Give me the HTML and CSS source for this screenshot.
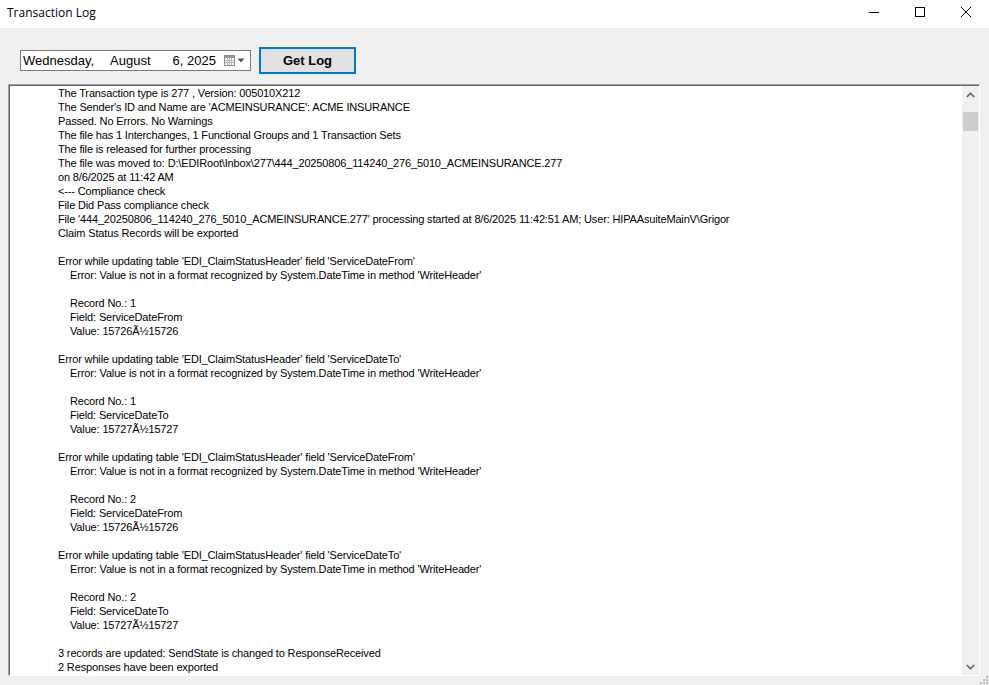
FILE: index.html
```html
<!DOCTYPE html>
<html lang="en">
<head>
    <meta charset="UTF-8">
    <title>Transaction Log</title>
    <link rel="stylesheet" href="styles.css">
</head>
<body>
    <div class="window">
        <div class="titlebar">
            <span class="title">Transaction Log</span>
            <div class="controls">
                <div class="ctl">
                    <svg width="10" height="10" viewBox="0 0 10 10"><path d="M0 5.5h10" stroke="#000" stroke-width="1"/></svg>
                </div>
                <div class="ctl">
                    <svg width="10" height="10" viewBox="0 0 10 10"><rect x="0.5" y="0.5" width="9" height="9" fill="none" stroke="#000" stroke-width="1"/></svg>
                </div>
                <div class="ctl">
                    <svg width="10" height="10" viewBox="0 0 10 10"><path d="M0 0L10 10M10 0L0 10" stroke="#000" stroke-width="1"/></svg>
                </div>
            </div>
        </div>

        <div class="toolbar">
            <div class="datepicker">
                <span class="d-day">Wednesday,</span>
                <span class="d-month">August</span>
                <span class="d-date">6, 2025</span>
                <span class="d-btn">
                    <svg width="11" height="11" viewBox="0 0 11 11">
                        <rect x="0.5" y="0.5" width="10" height="10" fill="#fff" stroke="#8a8a8a"/>
                        <rect x="1" y="1" width="9" height="2" fill="#9a9a9a"/>
                        <path d="M1 5.5h9M1 7.5h9M3.5 3v7M5.5 3v7M7.5 3v7" stroke="#b5b5b5" stroke-width="1"/>
                    </svg>
                    <svg width="8" height="5" viewBox="0 0 8 5"><path d="M0.5 0.5h7L4 4.5z" fill="#555"/></svg>
                </span>
            </div>
            <button class="getlog">Get Log</button>
        </div>

        <div class="logbox">
            <div class="logtext">
                <div>The Transaction type is 277 , Version: 005010X212</div>
                <div>The Sender's ID and Name are 'ACMEINSURANCE': ACME INSURANCE</div>
                <div>Passed. No Errors. No Warnings</div>
                <div>The file has 1 Interchanges, 1 Functional Groups and 1 Transaction Sets</div>
                <div>The file is released for further processing</div>
                <div>The file was moved to: D:\EDIRoot\Inbox\277\444_20250806_114240_276_5010_ACMEINSURANCE.277</div>
                <div>on 8/6/2025 at 11:42 AM</div>
                <div>&lt;--- Compliance check</div>
                <div>File Did Pass compliance check</div>
                <div>File '444_20250806_114240_276_5010_ACMEINSURANCE.277' processing started at 8/6/2025 11:42:51 AM; User: HIPAAsuiteMainV\Grigor</div>
                <div>Claim Status Records will be exported</div>
                <div class="blank"></div>
                <div>Error while updating table 'EDI_ClaimStatusHeader' field 'ServiceDateFrom'</div>
                <div class="ind">Error: Value is not in a format recognized by System.DateTime in method 'WriteHeader'</div>
                <div class="blank"></div>
                <div class="ind">Record No.: 1</div>
                <div class="ind">Field: ServiceDateFrom</div>
                <div class="ind">Value: 15726Ã½15726</div>
                <div class="blank"></div>
                <div>Error while updating table 'EDI_ClaimStatusHeader' field 'ServiceDateTo'</div>
                <div class="ind">Error: Value is not in a format recognized by System.DateTime in method 'WriteHeader'</div>
                <div class="blank"></div>
                <div class="ind">Record No.: 1</div>
                <div class="ind">Field: ServiceDateTo</div>
                <div class="ind">Value: 15727Ã½15727</div>
                <div class="blank"></div>
                <div>Error while updating table 'EDI_ClaimStatusHeader' field 'ServiceDateFrom'</div>
                <div class="ind">Error: Value is not in a format recognized by System.DateTime in method 'WriteHeader'</div>
                <div class="blank"></div>
                <div class="ind">Record No.: 2</div>
                <div class="ind">Field: ServiceDateFrom</div>
                <div class="ind">Value: 15726Ã½15726</div>
                <div class="blank"></div>
                <div>Error while updating table 'EDI_ClaimStatusHeader' field 'ServiceDateTo'</div>
                <div class="ind">Error: Value is not in a format recognized by System.DateTime in method 'WriteHeader'</div>
                <div class="blank"></div>
                <div class="ind">Record No.: 2</div>
                <div class="ind">Field: ServiceDateTo</div>
                <div class="ind">Value: 15727Ã½15727</div>
                <div class="blank"></div>
                <div>3 records are updated: SendState is changed to ResponseReceived</div>
                <div>2 Responses have been exported</div>
            </div>
            <div class="scrollbar">
                <div class="sb-arrow">
                    <svg width="9" height="6" viewBox="0 0 9 6"><path d="M0.8 5L4.5 1.3L8.2 5" fill="none" stroke="#606060" stroke-width="1.6"/></svg>
                </div>
                <div class="sb-track"><div class="sb-thumb"></div></div>
                <div class="sb-arrow">
                    <svg width="9" height="6" viewBox="0 0 9 6"><path d="M0.8 1L4.5 4.7L8.2 1" fill="none" stroke="#606060" stroke-width="1.6"/></svg>
                </div>
            </div>
        </div>
        <div class="grip">
            <svg width="8" height="8" viewBox="0 0 8 8" fill="#bcbcbc">
                <rect x="6" y="0" width="2" height="2"/>
                <rect x="3" y="3" width="2" height="2"/><rect x="6" y="3" width="2" height="2"/>
                <rect x="0" y="6" width="2" height="2"/><rect x="3" y="6" width="2" height="2"/><rect x="6" y="6" width="2" height="2"/>
            </svg>
        </div>
    </div>
</body>
</html>
```

FILE: styles.css
```css
body { margin: 0; background: #f0f0f0; font-family: "Liberation Sans", Arial, sans-serif; overflow: hidden; }
.window { width: 989px; height: 685px; position: relative; background: #f0f0f0; }

.titlebar { height: 28px; background: #fff; display: flex; align-items: center; justify-content: space-between; }
.title { font-family: "Open Sans", "Noto Sans", sans-serif; font-size: 12px; color: #000; padding-left: 7px; margin-top: -4px; }
.controls { display: flex; align-self: stretch; }
.ctl { width: 46px; display: flex; align-items: center; justify-content: center; margin-top: -4px; }

.toolbar { display: flex; align-items: center; gap: 8px; padding: 19px 0 0 20px; height: 27px; }
.datepicker {
    width: 229px; height: 19px; background: #fff; border: 1px solid #7a7a7a;
    display: flex; align-items: center; font-size: 13px; color: #000; position: relative;
}
.d-day { padding-left: 2px; }
.d-month { padding-left: 16px; }
.d-date { padding-left: 22px; }
.d-btn { position: absolute; right: 5px; top: 4px; display: flex; align-items: center; gap: 2px; }

.getlog {
    width: 97px; height: 27px; background: #e1e1e1; border: 2px solid #0078d7;
    font-family: "Liberation Sans", Arial, sans-serif; font-weight: bold; font-size: 13px; color: #000;
    padding: 0; margin: 0;
}

.logbox {
    margin: 10px 0 0 8px; width: 970px; height: 590px; background: #fff;
    border-top: 1px solid #a0a0a0; border-left: 1px solid #a0a0a0;
    border-right: 1px solid #fff; border-bottom: 1px solid #fff;
    box-shadow: inset 1px 1px 0 #696969; display: flex;
}
.logtext { flex: 1; padding: 1px 0 0 49px; font-size: 11px; line-height: 14px; letter-spacing: -0.15px; color: #000; overflow: hidden; }
.logtext div { white-space: pre; height: 14px; }
.logtext .ind { padding-left: 12px; }

.scrollbar { width: 17px; margin: 1px 0 0 0; background: #f0f0f0; display: flex; flex-direction: column; }
.sb-arrow { height: 17px; display: flex; align-items: center; justify-content: center; }
.sb-track { flex: 1; }
.sb-thumb { margin: 9px 1px 0 1px; height: 19px; background: #cdcdcd; }

.grip { position: absolute; right: 1px; bottom: 1px; line-height: 0; }
```
